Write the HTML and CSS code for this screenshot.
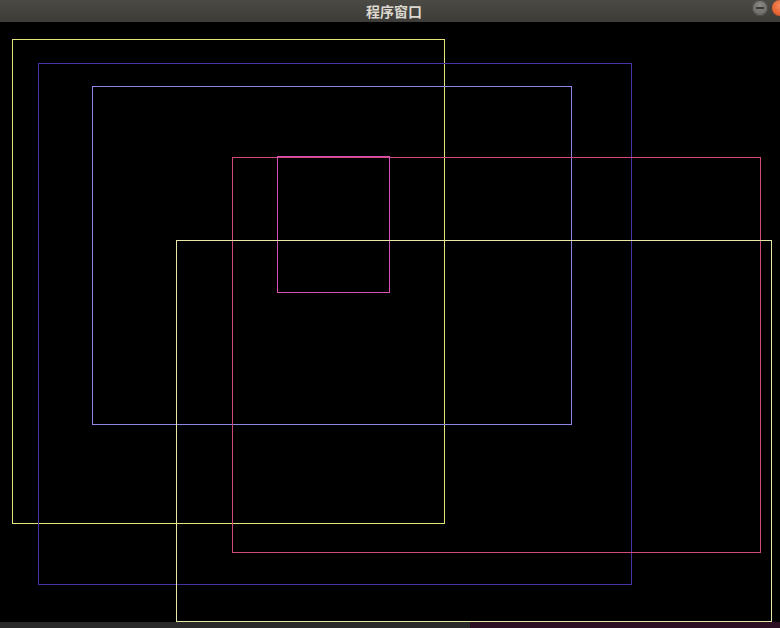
FILE: index.html
```html
<!DOCTYPE html>
<html>
<head>
<meta charset="utf-8">
<link rel="stylesheet" href="styles.css">
</head>
<body>
<div class="window">
  <div class="titlebar">
    <span class="title">程序窗口</span>
    <div class="controls">
      <span class="btn min"><span class="dash"></span></span>
      <span class="btn close"></span>
    </div>
  </div>
  <div class="canvas">
    <div class="rect r1"></div>
    <div class="rect r2"></div>
    <div class="rect r3"></div>
    <div class="rect r4"></div>
    <div class="rect r5"></div>
    <div class="rect r6"></div>
  </div>
  <div class="strip">
    <div class="strip-left"></div>
    <div class="strip-right"></div>
  </div>
</div>
</body>
</html>
```
FILE: styles.css
```css
html, body {
  margin: 0;
  padding: 0;
  background: #000;
}
.window {
  width: 780px;
  height: 628px;
  display: flex;
  flex-direction: column;
  overflow: hidden;
}
.titlebar {
  height: 22px;
  flex: 0 0 22px;
  background: linear-gradient(#4b4a45, #3d3c38);
  display: flex;
  align-items: center;
  justify-content: center;
  position: relative;
}
.title {
  font-family: "Noto Sans CJK SC", "Noto Sans", sans-serif;
  font-weight: bold;
  font-size: 14px;
  color: #dcd8cf;
  line-height: 22px;
  margin-left: 8px;
}
.controls {
  position: absolute;
  left: 752px;
  top: 0;
  display: flex;
  gap: 4px;
}
.btn {
  width: 16px;
  height: 16px;
  border-radius: 50%;
  display: flex;
  align-items: center;
  justify-content: center;
}
.min {
  background: radial-gradient(circle at 50% 35%, #8a8985, #5e5d59);
  box-shadow: inset 0 0 0 1px #4a4945;
}
.dash {
  width: 8px;
  height: 2px;
  background: #3c3b38;
}
.close {
  background: radial-gradient(circle at 50% 35%, #f58a5a, #dd4c1b);
}
.canvas {
  flex: 0 0 600px;
  height: 600px;
  position: relative;
  background: #000;
}
.rect {
  position: absolute;
  box-sizing: border-box;
  border: 1px solid;
}
.r1 { left: 12px; top: 17px; width: 433px; height: 485px; border-color: #e4e47a; }
.r2 { left: 38px; top: 41px; width: 594px; height: 522px; border-color: #4a30a6; }
.r3 { left: 92px; top: 64px; width: 480px; height: 339px; border-color: #8e87e6; }
.r4 { left: 232px; top: 135px; width: 529px; height: 396px; border-color: #d4487c; }
.r5 { left: 277px; top: 134px; width: 113px; height: 137px; border-color: #d552b4; }
.r6 { left: 176px; top: 218px; width: 596px; height: 382px; border-color: #e6e6a8; }
.strip {
  flex: 0 0 6px;
  display: flex;
}
.strip-left {
  width: 470px;
  background: #2a2a2a;
}
.strip-right {
  flex: 1;
  background: #2c0f23;
}
```
